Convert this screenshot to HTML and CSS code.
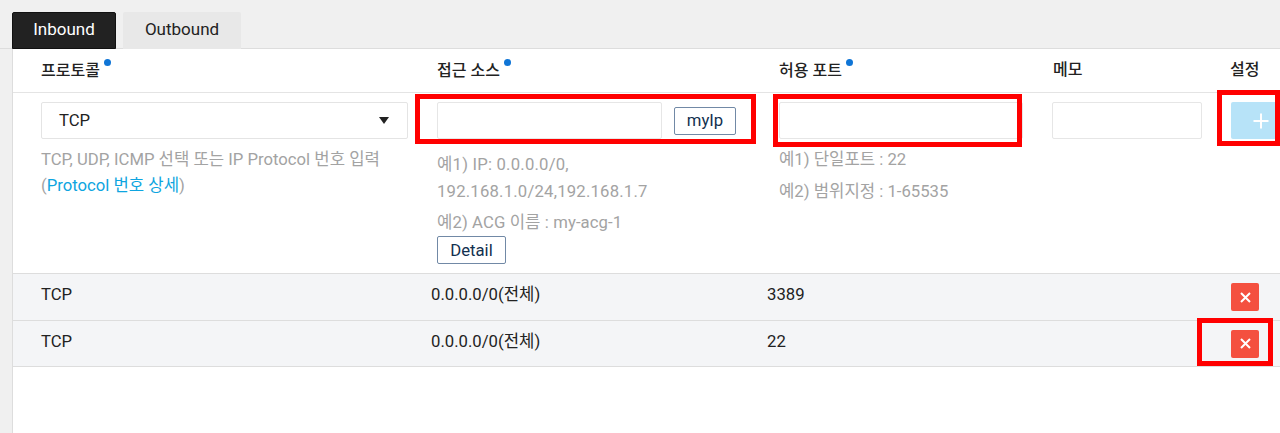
FILE: index.html
```html
<!DOCTYPE html>
<html lang="en">
<head>
    <meta charset="UTF-8">
    <meta name="viewport" content="width=device-width, initial-scale=1.0">
    <title>ACG Rules</title>
    <link rel="stylesheet" href="styles.css">
</head>
<body>
    <div class="tabs">
        <div class="tab tab-active">Inbound</div>
        <div class="tab">Outbound</div>
    </div>

    <div class="panel">
        <div class="head-row">
            <div class="head-cell head-protocol">프로토콜<span class="dot"></span></div>
            <div class="head-cell head-source">접근 소스<span class="dot"></span></div>
            <div class="head-cell head-port">허용 포트<span class="dot"></span></div>
            <div class="head-cell head-memo">메모</div>
            <div class="head-cell head-setting">설정</div>
        </div>

        <div class="form-row">
            <div class="col-protocol">
                <div class="select">TCP<span class="caret"></span></div>
                <p class="hint hint-protocol">TCP, UDP, ICMP 선택 또는 IP Protocol 번호 입력<br>(<a class="link">Protocol 번호 상세</a>)</p>
            </div>
            <div class="col-source">
                <div class="source-inputs">
                    <div class="input input-source"></div>
                    <button class="btn btn-myip">myIp</button>
                </div>
                <p class="hint hint-source">예1) IP: 0.0.0.0/0,<br>192.168.1.0/24,192.168.1.7</p>
                <p class="hint hint-acg">예2) ACG 이름 : my-acg-1</p>
                <button class="btn btn-detail">Detail</button>
            </div>
            <div class="col-port">
                <div class="input input-port"></div>
                <p class="hint hint-port">예1) 단일포트 : 22</p>
                <p class="hint hint-port2">예2) 범위지정 : 1-65535</p>
            </div>
            <div class="col-memo">
                <div class="input input-memo"></div>
            </div>
            <div class="col-add">
                <div class="btn-add">
                    <svg width="16" height="16" viewBox="0 0 16 16"><path d="M8 0.5v15M0.5 8h15" stroke="#fff" stroke-width="2" fill="none"/></svg>
                </div>
            </div>
        </div>

        <div class="rule-row">
            <div class="rule-cell rule-protocol">TCP</div>
            <div class="rule-cell rule-source">0.0.0.0/0(전체)</div>
            <div class="rule-cell rule-port">3389</div>
            <div class="btn-del">
                <svg width="13" height="13" viewBox="0 0 13 13"><path d="M2 2l9 9M11 2l-9 9" stroke="#fff" stroke-width="2" fill="none"/></svg>
            </div>
        </div>
        <div class="rule-row">
            <div class="rule-cell rule-protocol">TCP</div>
            <div class="rule-cell rule-source">0.0.0.0/0(전체)</div>
            <div class="rule-cell rule-port">22</div>
            <div class="btn-del">
                <svg width="13" height="13" viewBox="0 0 13 13"><path d="M2 2l9 9M11 2l-9 9" stroke="#fff" stroke-width="2" fill="none"/></svg>
            </div>
        </div>
    </div>

    <!-- red annotation boxes drawn over the screenshot -->
    <div class="mark mark-source"></div>
    <div class="mark mark-port"></div>
    <div class="mark mark-add"></div>
    <div class="mark mark-del"></div>
</body>
</html>
```

FILE: styles.css
```css
* {
    box-sizing: border-box;
}
html, body {
    height: 100%;
}
body {
    margin: 0;
    background-color: #f0f0f0;
    color: #222;
    font-family: Roboto, "Noto Sans CJK KR", sans-serif;
    font-size: 16.7px;
    overflow: hidden;
    position: relative;
}
.tabs {
    display: flex;
    gap: 7px;
    height: 49px;
    padding: 12px 0 0 12px;
    border-bottom: 1px solid #ddd;
}
.tab {
    width: 118px;
    height: 37px;
    font-size: 17px;
    line-height: 35px;
    text-align: center;
    background-color: #e8e8e8;
    border-radius: 2px 2px 0 0;
    color: #222;
}
.tab-active {
    width: 104px;
    line-height: 33px;
    background-color: #222;
    color: #fff;
    border: 1px solid #111;
}
.panel {
    margin-left: 12px;
    height: 384px;
    background-color: #fff;
    border-left: 1px solid #ddd;
}
.head-row {
    display: flex;
    height: 44px;
    border-bottom: 1px solid #e4e4e4;
    font-size: 16px;
    font-weight: 500;
    padding-top: 10px;
}
.head-cell {
    flex-shrink: 0;
    line-height: 22px;
    color: #222;
}
.head-protocol {
    width: 412px;
    padding-left: 28px;
}
.head-source {
    width: 342px;
    padding-left: 12px;
}
.head-port {
    width: 274px;
    padding-left: 12px;
}
.head-memo {
    width: 178px;
    padding-left: 12px;
}
.head-setting {
    padding-left: 11px;
}
.dot {
    display: inline-block;
    width: 7px;
    height: 7px;
    border-radius: 50%;
    background-color: #0f75d6;
    margin-left: 4px;
    vertical-align: 10px;
}
.form-row {
    display: flex;
    height: 181px;
    padding-top: 9px;
    border-bottom: 1px solid #ddd;
}
.form-row > div {
    flex-shrink: 0;
}
.col-protocol {
    width: 412px;
    padding-left: 28px;
}
.col-source {
    width: 342px;
    padding-left: 12px;
}
.col-port {
    width: 274px;
    padding-left: 12px;
}
.col-memo {
    width: 178px;
    padding-left: 11px;
}
.col-add {
    padding-left: 12px;
}
.select {
    position: relative;
    width: 367px;
    height: 37px;
    line-height: 35px;
    padding-left: 17px;
    border: 1px solid #e4e4e4;
    border-radius: 2px;
}
.caret {
    position: absolute;
    right: 18px;
    top: 14px;
    border-left: 5.5px solid transparent;
    border-right: 5.5px solid transparent;
    border-top: 7px solid #222;
}
.input {
    height: 37px;
    border: 1px solid #e6e6e6;
    border-radius: 2px;
    background-color: #fff;
}
.source-inputs {
    display: flex;
    align-items: center;
    gap: 12px;
}
.input-source {
    width: 225px;
}
.input-port {
    width: 244px;
}
.input-memo {
    width: 150px;
}
.btn {
    background-color: #fff;
    color: #12304f;
    border: 1px solid #7189a6;
    border-radius: 2px;
    font-family: inherit;
    font-size: 16.7px;
    padding: 0;
}
.btn-myip {
    width: 62px;
    height: 28px;
}
.btn-detail {
    display: block;
    width: 69px;
    height: 28px;
    margin-top: 0;
}
.hint {
    margin: 0;
    color: #a3a3a3;
    font-size: 16.7px;
    line-height: 26px;
}
.hint-protocol {
    margin-top: 8px;
}
.hint-source {
    margin-top: 12px;
    line-height: 27px;
    letter-spacing: 0.2px;
}
.hint-acg {
    margin-top: 5px;
    letter-spacing: 0.1px;
}
.hint-port {
    margin-top: 8px;
}
.hint-port2 {
    margin-top: 6px;
}
.link {
    color: #0ea5e0;
}
.btn-add {
    display: flex;
    align-items: center;
    justify-content: center;
    width: 60px;
    height: 37px;
    background-color: #b7e3f8;
    border-radius: 2px;
}
.rule-row {
    display: flex;
    align-items: center;
    height: 47px;
    background-color: #f4f5f7;
    border-bottom: 1px solid #ddd;
}
.rule-row:last-child {
    height: 46px;
}
.rule-cell {
    flex-shrink: 0;
    line-height: 22px;
    padding-bottom: 4px;
}
.rule-protocol {
    width: 418px;
    padding-left: 28px;
}
.rule-source {
    width: 336px;
}
.rule-port {
    width: 464px;
}
.btn-del {
    display: flex;
    align-items: center;
    justify-content: center;
    width: 28px;
    height: 28px;
    background-color: #f4503f;
    border-radius: 2px;
}
.mark {
    position: absolute;
    border: 5px solid #f00;
}
.mark-source {
    left: 415px;
    top: 94px;
    width: 341px;
    height: 50px;
}
.mark-port {
    left: 773px;
    top: 94px;
    width: 249px;
    height: 53px;
}
.mark-add {
    left: 1217px;
    top: 90px;
    width: 63px;
    height: 56px;
}
.mark-del {
    left: 1197px;
    top: 318px;
    width: 76px;
    height: 48px;
}
```
